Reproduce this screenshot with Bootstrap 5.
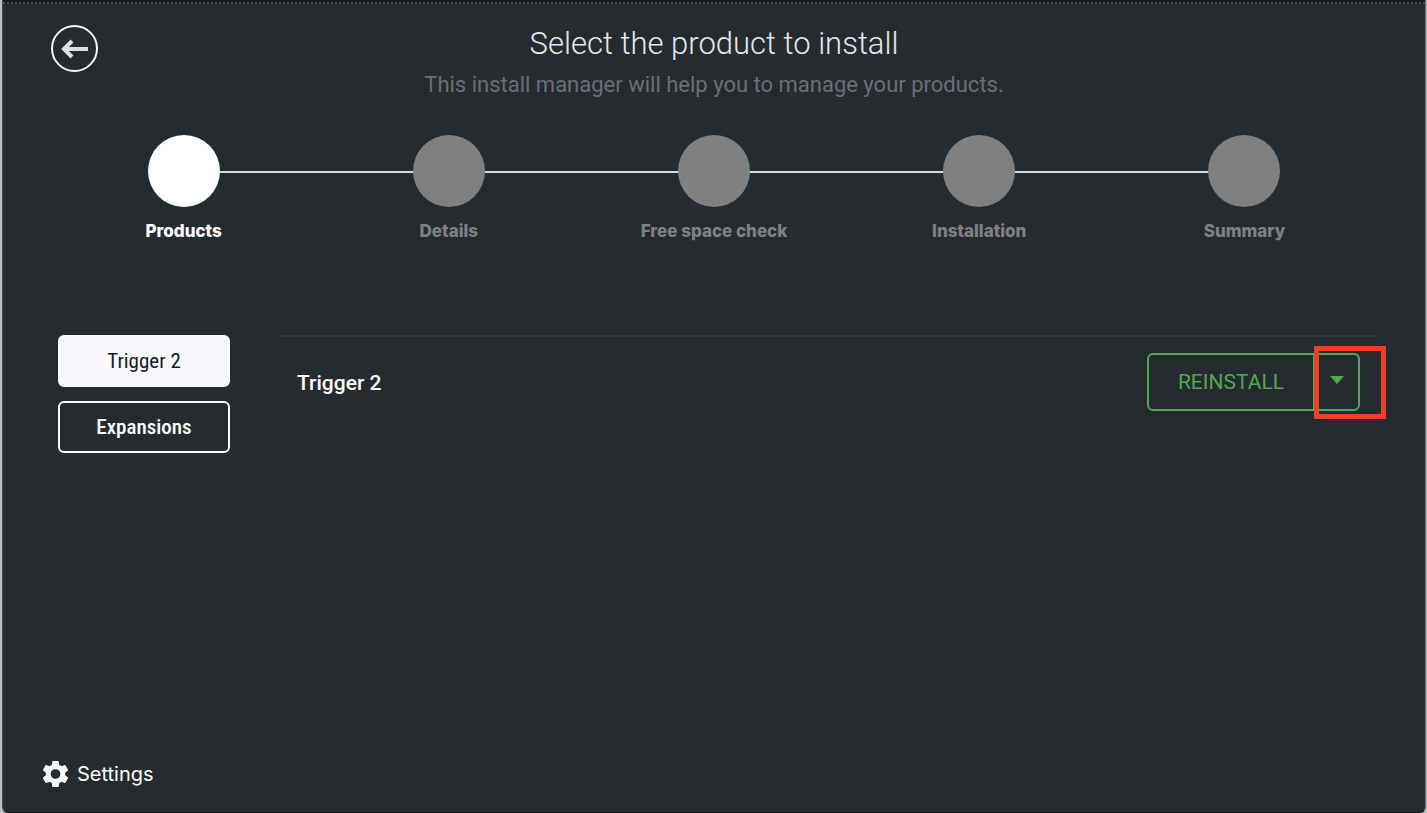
<!DOCTYPE html>
<html lang="en">
<head>
<meta charset="utf-8">
<meta name="viewport" content="width=device-width, initial-scale=1">
<title>Install manager</title>
<link href="https://cdn.jsdelivr.net/npm/bootstrap@5.3.0/dist/css/bootstrap.min.css" rel="stylesheet">
<style>
  body { background: #bcbfc0; font-family: Roboto, "Liberation Sans", sans-serif; color: #fff; }
  .app-window {
    background: #262b2f; margin: 0 1px 0 2px; border: 1px solid #414b52; border-top: 0;
    border-right-color: #65727a; border-bottom-color: #15181a; border-radius: 0 0 6px 6px;
  }
  .top-edge { height: 4px; background: #17191b; border-bottom: 2px dotted #4b4c4d; margin-bottom: 21px; }
  .page-inner { padding: 0 48px; }
  .head-grid { display: grid; grid-template-columns: 1fr auto 1fr; }
  .btn-back { width: 47px; height: 47px; border: 2px solid #f4f5f6; color: #dcdfe8; }
  .btn-back:hover { color: #fff; border-color: #fff; }
  .page-title { font-size: 31px; line-height: 38px; font-weight: 300; color: #e4e8ec; }
  .page-sub { font-size: 22px; line-height: 28px; color: #6b7078; margin-top: 8px; }
  .stepper { margin-top: 36px; }
  .step { position: relative; color: #808080; font: 800 17px/24px Inter, sans-serif; }
  .step-dot { width: 72px; height: 72px; background: #808080; position: relative; z-index: 1; }
  .step + .step::before {
    content: ""; position: absolute; top: 36px; left: -50%; width: 100%; height: 2px; background: #d5dadb;
  }
  .step.current { color: #fff; }
  .step.current .step-dot { background: #fff; }
  .work-area { margin-top: 92px; padding-left: 7px; gap: 50px; }
  .side-tabs { width: 172px; gap: 14px; }
  .side-tabs .btn {
    --bs-btn-font-family: "Roboto Condensed", Roboto, sans-serif;
    --bs-btn-font-size: 21px; --bs-btn-line-height: 24px; --bs-btn-padding-y: 12px;
    --bs-btn-border-width: 2px; --bs-btn-border-color: #f8f9fd; --bs-btn-color: #fff;
    --bs-btn-active-bg: #f8f9fd; --bs-btn-active-color: #16191c; --bs-btn-active-border-color: #f8f9fd;
    --bs-btn-hover-color: #fff; --bs-btn-hover-border-color: #fff;
  }
  .side-tabs .btn:not(.active) { font-weight: 500; }
  .product-row { border-top: 2px solid #31363a; padding: 16px 17px; }
  .product-name { font-size: 21px; line-height: 28px; font-weight: 500; padding-top: 2px; }
  .product-actions .btn {
    --bs-btn-color: #52a852; --bs-btn-border-color: #52a852; --bs-btn-border-width: 2px;
    --bs-btn-font-size: 21px; --bs-btn-line-height: 30px; --bs-btn-padding-y: 12px; --bs-btn-padding-x: 29px;
    --bs-btn-hover-color: #52a852; --bs-btn-hover-border-color: #52a852;
  }
  .product-actions .btn-more { --bs-btn-padding-x: 13px; width: 46px; }
  .callout-frame::after {
    content: ""; position: absolute; inset: -7px -26px -8px 0; border: 5px solid #ee4025; z-index: 5; pointer-events: none;
  }
  .settings-link { color: #fff; font: 400 20px/28px Inter, sans-serif; gap: 8px; padding: 0 0 24px 39px; }
</style>
</head>
<body>
<div class="app-window min-vh-100 d-flex flex-column">
  <div class="top-edge"></div>
  <div class="page-inner flex-grow-1">
    <header class="head-grid">
      <div>
        <button type="button" class="btn btn-back rounded-circle p-0 d-flex align-items-center justify-content-center" aria-label="Back">
          <svg width="28" height="20" viewBox="0 0 28 20" fill="none" stroke="currentColor" stroke-width="4" aria-hidden="true"><path d="M27 10H4M11 2 3 10l8 8"/></svg>
        </button>
      </div>
      <div class="text-center">
        <h1 class="page-title mb-0">Select the product to install</h1>
        <p class="page-sub mb-0">This install manager will help you to manage your products.</p>
      </div>
    </header>

    <ol class="stepper list-unstyled d-flex mb-0">
      <li class="step current col d-flex flex-column align-items-center" aria-current="step"><span class="step-dot rounded-circle mb-2"></span><span class="pt-1">Products</span></li>
      <li class="step col d-flex flex-column align-items-center"><span class="step-dot rounded-circle mb-2"></span><span class="pt-1">Details</span></li>
      <li class="step col d-flex flex-column align-items-center"><span class="step-dot rounded-circle mb-2"></span><span class="pt-1">Free space check</span></li>
      <li class="step col d-flex flex-column align-items-center"><span class="step-dot rounded-circle mb-2"></span><span class="pt-1">Installation</span></li>
      <li class="step col d-flex flex-column align-items-center"><span class="step-dot rounded-circle mb-2"></span><span class="pt-1">Summary</span></li>
    </ol>

    <div class="work-area d-flex align-items-start">
      <nav class="side-tabs d-flex flex-column flex-shrink-0" aria-label="Product groups">
        <button type="button" class="btn active">Trigger 2</button>
        <button type="button" class="btn">Expansions</button>
      </nav>
      <main class="flex-grow-1">
        <div class="product-row d-flex align-items-center justify-content-between">
          <span class="product-name">Trigger 2</span>
          <div class="product-actions btn-group">
            <button type="button" class="btn">REINSTALL</button>
            <div class="btn-group callout-frame">
              <button type="button" class="btn btn-more d-flex align-items-center justify-content-center" aria-label="More actions">
                <svg class="mb-1" width="14" height="8" viewBox="0 0 14 8" fill="currentColor" aria-hidden="true"><path d="M0 0h14L7 8z"/></svg>
              </button>
            </div>
          </div>
        </div>
      </main>
    </div>
  </div>

  <footer class="d-flex">
    <a href="#" class="settings-link d-inline-flex align-items-center text-decoration-none">
      <svg width="27" height="28" viewBox="2 2 20 20" fill="#f8f9fd" aria-hidden="true"><path d="M19.14 12.94c.04-.3.06-.61.06-.94 0-.32-.02-.64-.07-.94l2.03-1.58a.49.49 0 0 0 .12-.61l-1.92-3.32a.488.488 0 0 0-.59-.22l-2.39.96c-.5-.38-1.03-.7-1.62-.94l-.36-2.54a.484.484 0 0 0-.48-.41h-3.84c-.24 0-.43.17-.47.41l-.36 2.54c-.59.24-1.13.57-1.62.94l-2.39-.96c-.22-.08-.47 0-.59.22L2.74 8.87c-.12.21-.08.47.12.61l2.03 1.58c-.05.3-.09.63-.09.94s.02.64.07.94l-2.03 1.58a.49.49 0 0 0-.12.61l1.92 3.32c.12.22.37.29.59.22l2.39-.96c.5.38 1.03.7 1.62.94l.36 2.54c.05.24.24.41.48.41h3.84c.24 0 .44-.17.47-.41l.36-2.54c.59-.24 1.13-.56 1.62-.94l2.39.96c.22.08.47 0 .59-.22l1.92-3.32c.12-.22.07-.47-.12-.61zM12 15.6A3.61 3.61 0 0 1 8.4 12 3.61 3.61 0 0 1 12 8.4a3.61 3.61 0 0 1 3.6 3.6 3.61 3.61 0 0 1-3.6 3.6z"/></svg>
      <span>Settings</span>
    </a>
  </footer>
</div>
<script src="https://cdn.jsdelivr.net/npm/bootstrap@5.3.0/dist/js/bootstrap.bundle.min.js"></script>
</body>
</html>
